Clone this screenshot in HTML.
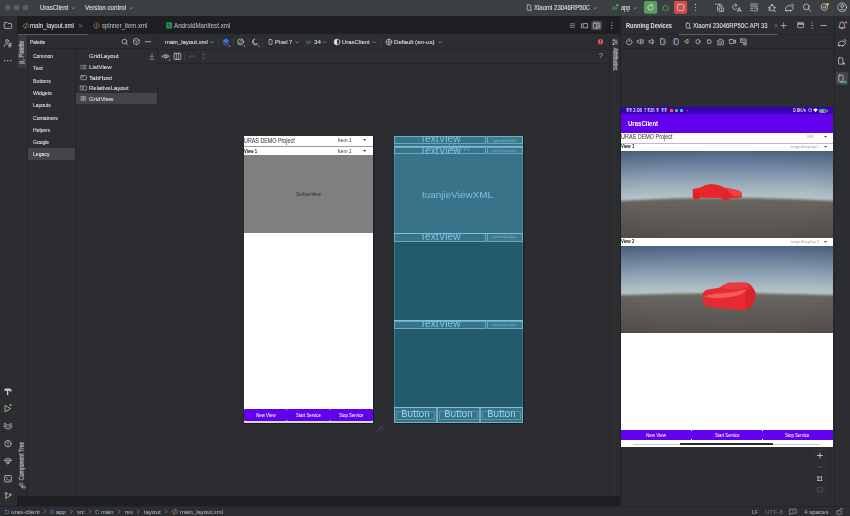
<!DOCTYPE html>
<html><head><meta charset="utf-8">
<style>
*{box-sizing:border-box;margin:0;padding:0}
html,body{width:850px;height:516px;overflow:hidden;background:#2b2d30;font-family:"Liberation Sans",sans-serif;color:#dfe1e5}
.a{position:absolute}
.t{position:absolute;white-space:nowrap;font-size:40px;line-height:40px;transform-origin:0 34px;will-change:transform}
svg{overflow:visible}
</style></head><body>
<div class="a" style="left:0px;top:0px;width:850px;height:16px;background:#3c3f41;"></div>
<div class="a" style="left:17px;top:16px;width:603.5px;height:18px;background:#1e1f22;"></div>
<div class="a" style="left:620.5px;top:16px;width:213px;height:18px;background:#2b2d30;"></div>
<div class="a" style="left:0px;top:16px;width:17px;height:490px;background:#2b2d30;"></div>
<div class="a" style="left:833.5px;top:16px;width:16.5px;height:490px;background:#2b2d30;border-left:0.7px solid #232528"></div>
<div class="a" style="left:17px;top:495.5px;width:603.5px;height:10px;background:#1e1f22;"></div>
<div class="a" style="left:0px;top:505.5px;width:850px;height:10.5px;background:#2b2d30;border-top:0.7px solid #242629"></div>
<div class="a" style="left:17.5px;top:33.5px;width:70.5px;height:1.5px;background:#5a5d63;"></div>
<div class="a" style="left:27px;top:35px;width:0.6px;height:460.5px;background:#232528;"></div>
<div class="a" style="left:17.5px;top:35px;width:9.5px;height:33px;background:#393b40;"></div>
<div class="a" style="left:28px;top:48.3px;width:129.5px;height:0.6px;background:#232528;"></div>
<div class="a" style="left:75.2px;top:49px;width:0.6px;height:446.5px;background:#232528;"></div>
<div class="a" style="left:157.3px;top:35px;width:0.6px;height:460.5px;background:#25272a;"></div>
<div class="a" style="left:27.7px;top:148.2px;width:47.5px;height:12px;background:#43454a;"></div>
<div class="a" style="left:76px;top:93.2px;width:81.3px;height:10.6px;background:#43454a;"></div>
<div class="a" style="left:158px;top:49.2px;width:451.5px;height:0.6px;background:#232528;"></div>
<div class="a" style="left:158px;top:63.2px;width:451.5px;height:0.6px;background:#232528;"></div>
<div class="a" style="left:609.3px;top:35px;width:0.6px;height:460.5px;background:#232528;"></div>
<div class="a" style="left:620.2px;top:16px;width:0.7px;height:490px;background:#202124;"></div>
<div class="a" style="left:621px;top:34.2px;width:212.5px;height:0.6px;background:#232528;"></div>
<div class="a" style="left:621px;top:48.3px;width:212.5px;height:0.6px;background:#232528;"></div>
<div class="a" style="left:679px;top:33.5px;width:98.5px;height:1.3px;background:#5a5d63;"></div>
<div class="a" style="left:243.8px;top:136px;width:129.2px;height:286.7px;background:#ffffff;box-shadow:0.5px 0.5px 1px 0.5px #1c1d1f"></div>
<div class="a" style="left:243.8px;top:146.2px;width:129.2px;height:0.9px;background:#9a9a9a;"></div>
<div class="a" style="left:243.8px;top:154.6px;width:129.2px;height:78.7px;background:#808080;"></div>
<div class="a" style="left:243.8px;top:421px;width:129.2px;height:1.7px;background:#d8d8d8;"></div>
<div class="a" style="left:243.8px;top:409px;width:42.8px;height:12px;background:#6200ee;border-radius:1.2px"></div>
<div class="a" style="left:286.9px;top:409px;width:42.7px;height:12px;background:#6200ee;border-radius:1.2px"></div>
<div class="a" style="left:329.9px;top:409px;width:43.1px;height:12px;background:#6200ee;border-radius:1.2px"></div>
<div class="a" style="left:393.8px;top:136px;width:129.2px;height:286.7px;background:#235b6d;box-shadow:0.5px 0.5px 1px 0.5px #1c1d1f"></div>
<div class="a" style="left:393.8px;top:136px;width:129.2px;height:97.2px;background:#38738a;"></div>
<div class="a" style="left:393.8px;top:233px;width:129.2px;height:8.8px;background:#38738a;"></div>
<div class="a" style="left:393.8px;top:320.5px;width:129.2px;height:8.2px;background:#38738a;"></div>
<div class="a" style="left:393.8px;top:407px;width:129.2px;height:15.7px;background:#38738a;"></div>
<div class="a" style="left:620.8px;top:107.3px;width:212.2px;height:339.5px;background:#ffffff;"></div>
<div class="a" style="left:620.8px;top:107.3px;width:212.2px;height:6.5px;background:#3700b3;"></div>
<div class="a" style="left:620.8px;top:113.8px;width:212.2px;height:19.7px;background:#6200ee;"></div>
<div class="a" style="left:620.8px;top:143px;width:212.2px;height:0.9px;background:#bdbdbd;"></div>
<div class="a" style="left:620.8px;top:429.5px;width:212.2px;height:10.5px;background:#6200ee;"></div>
<svg class="a" style="left:620.8px;top:151px;overflow:hidden" width="212.2" height="87" viewBox="0 0 212.2 87"><defs>
<linearGradient id="sky1" x1="0" y1="0" x2="0" y2="1"><stop offset="0" stop-color="#506685"/><stop offset="0.25" stop-color="#6a819d"/><stop offset="0.5" stop-color="#899cb1"/><stop offset="0.78" stop-color="#a9b8c2"/><stop offset="1" stop-color="#bfcccd"/></linearGradient>
<linearGradient id="gr1" x1="0" y1="0" x2="0" y2="1"><stop offset="0" stop-color="#77746d"/><stop offset="0.08" stop-color="#686560"/><stop offset="0.45" stop-color="#5f5b56"/><stop offset="1" stop-color="#53504b"/></linearGradient>
<radialGradient id="vg1" cx="0.5" cy="0.5" r="0.75"><stop offset="0.55" stop-color="#000" stop-opacity="0"/><stop offset="1" stop-color="#000" stop-opacity="0.09"/></radialGradient>
<filter id="bl1" x="-5%" y="-20%" width="110%" height="140%"><feGaussianBlur stdDeviation="0.45"/></filter><filter id="bg1" x="-5%" y="-20%" width="110%" height="140%"><feGaussianBlur stdDeviation="0.8"/></filter>
</defs>
<rect width="212.2" height="51.8" fill="url(#sky1)"/>
<path d="M-6 50.099999999999994 L0 49.8 Q106.1 43.400000000000006 212.2 49.8 L218.2 50.099999999999994 L218.2 93 L-6 93Z" fill="url(#gr1)" filter="url(#bg1)"/>
<rect width="212.2" height="87" fill="url(#vg1)"/>
<g filter="url(#bl1)"><path d="M 71.60,38.20 L 74.20,37.40 L 79.20,36.40 L 84.20,34.20 Q 87.20,33.00 90.20,32.90 Q 95.20,33.00 98.70,34.50 L 103.20,36.60 L 109.20,37.60 L 116.20,39.00 Q 120.80,40.50 120.80,43.00 L 120.80,46.40 L 116.20,47.00 L 109.20,47.20 Q 108.20,49.00 104.70,49.00 Q 101.20,49.00 100.40,47.00 L 79.70,46.80 Q 78.70,48.60 75.40,48.60 Q 72.20,48.60 71.80,46.00 Z" fill="#e8272d"/><path d="M 103.20,37.00 L 116.20,39.40 Q 120.20,41.00 120.50,43.00 L 120.50,45.00 L 112.20,45.00 Q 108.20,39.00 103.20,37.00 Z" fill="#ef4345"/><circle cx="75.5" cy="44.80000000000001" r="3.2" fill="#dc2328"/><circle cx="104.70000000000005" cy="45.19999999999999" r="3.5" fill="#dd2429"/></g></svg>
<svg class="a" style="left:620.8px;top:245.75px;overflow:hidden" width="212.2" height="87" viewBox="0 0 212.2 87"><defs>
<linearGradient id="sky2" x1="0" y1="0" x2="0" y2="1"><stop offset="0" stop-color="#506685"/><stop offset="0.25" stop-color="#6a819d"/><stop offset="0.5" stop-color="#899cb1"/><stop offset="0.78" stop-color="#a9b8c2"/><stop offset="1" stop-color="#bfcccd"/></linearGradient>
<linearGradient id="gr2" x1="0" y1="0" x2="0" y2="1"><stop offset="0" stop-color="#77746d"/><stop offset="0.08" stop-color="#686560"/><stop offset="0.45" stop-color="#5f5b56"/><stop offset="1" stop-color="#53504b"/></linearGradient>
<radialGradient id="vg2" cx="0.5" cy="0.5" r="0.75"><stop offset="0.55" stop-color="#000" stop-opacity="0"/><stop offset="1" stop-color="#000" stop-opacity="0.09"/></radialGradient>
<filter id="bl2" x="-5%" y="-20%" width="110%" height="140%"><feGaussianBlur stdDeviation="0.45"/></filter><filter id="bg2" x="-5%" y="-20%" width="110%" height="140%"><feGaussianBlur stdDeviation="0.8"/></filter>
</defs>
<rect width="212.2" height="50.9" fill="url(#sky2)"/>
<path d="M-6 49.199999999999996 L0 48.9 Q106.1 45.1 212.2 48.9 L218.2 49.199999999999996 L218.2 93 L-6 93Z" fill="url(#gr2)" filter="url(#bg2)"/>
<rect width="212.2" height="87" fill="url(#vg2)"/>
<g filter="url(#bl2)"><path d="M 81.60,49.25 Q 81.80,44.75 87.20,43.55 L 98.20,41.85 Q 103.20,38.05 108.20,36.85 L 124.20,36.55 Q 129.20,37.05 131.50,41.25 Q 135.20,45.25 134.70,50.75 L 132.70,56.25 Q 129.70,62.75 124.20,64.05 L 114.20,63.65 Q 94.20,62.25 83.20,59.85 Q 81.20,54.25 81.60,49.25 Z" fill="#e52a30"/><path d="M 98.20,41.85 Q 103.20,38.05 108.20,36.85 L 124.20,36.55 Q 128.20,37.25 127.20,41.25 Q 114.20,45.25 98.20,41.85 Z" fill="#ea3a3f"/><path d="M 83.20,50.75 Q 101.20,54.75 119.20,48.75 Q 125.20,46.25 124.70,42.75 Q 117.20,46.25 101.20,47.25 Q 89.20,47.25 83.20,50.75 Z" fill="#f4595a"/><path d="M 125.20,45.25 Q 129.20,41.25 132.20,43.25 Q 135.20,46.25 134.50,51.25 L 132.50,56.25 Q 129.70,62.25 125.20,63.25 Q 123.20,54.25 125.20,45.25 Z" fill="#d92429"/></g></svg>
<div class="t" style="left:39.60px;top:-24.05px;transform:scale(0.1510,0.1625);color:#dfe1e5;-webkit-text-stroke:0.012em #dfe1e5;">UrasClient</div>
<div class="t" style="left:84.80px;top:-24.05px;transform:scale(0.1557,0.1625);color:#dfe1e5;-webkit-text-stroke:0.012em #dfe1e5;">Version control</div>
<div class="t" style="left:533.80px;top:-24.05px;transform:scale(0.1505,0.1625);color:#dfe1e5;-webkit-text-stroke:0.012em #dfe1e5;">Xiaomi 23046RP50C</div>
<div class="t" style="left:621.30px;top:-23.75px;transform:scale(0.1394,0.1625);color:#dfe1e5;-webkit-text-stroke:0.012em #dfe1e5;">app</div>
<div class="t" style="left:30.40px;top:-6.00px;transform:scale(0.1519,0.1625);color:#dfe1e5;-webkit-text-stroke:0.012em #dfe1e5;">main_layout.xml</div>
<div class="t" style="left:101.70px;top:-6.00px;transform:scale(0.1498,0.1625);color:#b4b8bf;-webkit-text-stroke:0.012em #b4b8bf;">spinner_item.xml</div>
<div class="t" style="left:174.20px;top:-6.00px;transform:scale(0.1554,0.1625);color:#b4b8bf;-webkit-text-stroke:0.012em #b4b8bf;">AndroidManifest.xml</div>
<div class="t" style="left:626.00px;top:-6.00px;transform:scale(0.1418,0.1625);color:#dfe1e5;font-weight:bold;-webkit-text-stroke:0em #dfe1e5;">Running Devices</div>
<div class="t" style="left:693.40px;top:-6.00px;transform:scale(0.1485,0.1625);color:#dfe1e5;-webkit-text-stroke:0.012em #dfe1e5;">Xiaomi 23046RP50C API 33</div>
<div class="t" style="left:30.30px;top:10.00px;transform:scale(0.1229,0.1500);color:#dfe1e5;-webkit-text-stroke:0.012em #dfe1e5;">Palette</div>
<div class="t" style="left:32.90px;top:24.00px;transform:scale(0.1239,0.1500);color:#dfe1e5;-webkit-text-stroke:0.012em #dfe1e5;">Common</div>
<div class="t" style="left:32.90px;top:36.00px;transform:scale(0.1322,0.1500);color:#dfe1e5;-webkit-text-stroke:0.012em #dfe1e5;">Text</div>
<div class="t" style="left:32.90px;top:49.00px;transform:scale(0.1312,0.1500);color:#dfe1e5;-webkit-text-stroke:0.012em #dfe1e5;">Buttons</div>
<div class="t" style="left:32.90px;top:61.00px;transform:scale(0.1301,0.1500);color:#dfe1e5;-webkit-text-stroke:0.012em #dfe1e5;">Widgets</div>
<div class="t" style="left:32.90px;top:73.00px;transform:scale(0.1271,0.1500);color:#dfe1e5;-webkit-text-stroke:0.012em #dfe1e5;">Layouts</div>
<div class="t" style="left:32.90px;top:86.00px;transform:scale(0.1282,0.1500);color:#dfe1e5;-webkit-text-stroke:0.012em #dfe1e5;">Containers</div>
<div class="t" style="left:32.90px;top:98.00px;transform:scale(0.1255,0.1500);color:#dfe1e5;-webkit-text-stroke:0.012em #dfe1e5;">Helpers</div>
<div class="t" style="left:32.90px;top:110.00px;transform:scale(0.1248,0.1500);color:#dfe1e5;-webkit-text-stroke:0.012em #dfe1e5;">Google</div>
<div class="t" style="left:32.90px;top:122.00px;transform:scale(0.1279,0.1500);color:#dfe1e5;-webkit-text-stroke:0.012em #dfe1e5;">Legacy</div>
<div class="t" style="left:88.60px;top:24.00px;transform:scale(0.1518,0.1500);color:#dfe1e5;-webkit-text-stroke:0.012em #dfe1e5;">GridLayout</div>
<div class="t" style="left:88.60px;top:35.00px;transform:scale(0.1525,0.1500);color:#dfe1e5;-webkit-text-stroke:0.012em #dfe1e5;">ListView</div>
<div class="t" style="left:88.60px;top:46.00px;transform:scale(0.1561,0.1500);color:#dfe1e5;-webkit-text-stroke:0.012em #dfe1e5;">TabHost</div>
<div class="t" style="left:88.60px;top:56.00px;transform:scale(0.1497,0.1500);color:#dfe1e5;-webkit-text-stroke:0.012em #dfe1e5;">RelativeLayout</div>
<div class="t" style="left:88.60px;top:67.00px;transform:scale(0.1510,0.1500);color:#dfe1e5;-webkit-text-stroke:0.012em #dfe1e5;">GridView</div>
<div class="t" style="left:165.00px;top:10.00px;transform:scale(0.1484,0.1500);color:#dfe1e5;-webkit-text-stroke:0.012em #dfe1e5;">main_layout.xml</div>
<div class="t" style="left:275.30px;top:10.00px;transform:scale(0.1441,0.1500);color:#dfe1e5;-webkit-text-stroke:0.012em #dfe1e5;">Pixel 7</div>
<div class="t" style="left:314.00px;top:10.00px;transform:scale(0.1529,0.1500);color:#dfe1e5;-webkit-text-stroke:0.012em #dfe1e5;">34</div>
<div class="t" style="left:342.00px;top:10.00px;transform:scale(0.1484,0.1500);color:#dfe1e5;-webkit-text-stroke:0.012em #dfe1e5;">UrasClient</div>
<div class="t" style="left:394.00px;top:10.00px;transform:scale(0.1531,0.1500);color:#dfe1e5;-webkit-text-stroke:0.012em #dfe1e5;">Default (en-us)</div>
<div class="t" style="left:598.60px;top:24.34px;transform:scale(0.1708,0.1625);color:#9da0a8;-webkit-text-stroke:0.012em #9da0a8;">?</div>
<div class="t" style="left:22.00px;top:48.50px;transform-origin:0 0;transform:rotate(-90deg) scale(0.1325,0.1625) translate(-50%,-24px);color:#dfe1e5;-webkit-text-stroke:0.012em #dfe1e5;">Palette</div>
<div class="t" style="left:22.00px;top:461.20px;transform-origin:0 0;transform:rotate(-90deg) scale(0.1289,0.1625) translate(-50%,-24px);color:#dfe1e5;-webkit-text-stroke:0.012em #dfe1e5;">Component Tree</div>
<div class="t" style="left:614.80px;top:59.20px;transform-origin:0 0;transform:rotate(90deg) scale(0.1332,0.1625) translate(-50%,-24px);color:#dfe1e5;-webkit-text-stroke:0.012em #dfe1e5;">Attributes</div>
<div class="t" style="left:10.80px;top:480.00px;transform:scale(0.1561,0.1500);color:#a8abb2;-webkit-text-stroke:0.012em #a8abb2;">uras-client</div>
<div class="t" style="left:55.80px;top:480.00px;transform:scale(0.1484,0.1500);color:#a8abb2;-webkit-text-stroke:0.012em #a8abb2;">app</div>
<div class="t" style="left:76.70px;top:480.00px;transform:scale(0.1425,0.1500);color:#a8abb2;-webkit-text-stroke:0.012em #a8abb2;">src</div>
<div class="t" style="left:101.00px;top:480.00px;transform:scale(0.1442,0.1500);color:#a8abb2;-webkit-text-stroke:0.012em #a8abb2;">main</div>
<div class="t" style="left:124.80px;top:480.00px;transform:scale(0.1386,0.1500);color:#a8abb2;-webkit-text-stroke:0.012em #a8abb2;">res</div>
<div class="t" style="left:143.80px;top:480.00px;transform:scale(0.1565,0.1500);color:#a8abb2;-webkit-text-stroke:0.012em #a8abb2;">layout</div>
<div class="t" style="left:180.00px;top:480.00px;transform:scale(0.1488,0.1500);color:#a8abb2;-webkit-text-stroke:0.012em #a8abb2;">main_layout.xml</div>
<div class="t" style="left:751.80px;top:480.00px;transform:scale(0.1243,0.1500);color:#a8abb2;-webkit-text-stroke:0.012em #a8abb2;">LF</div>
<div class="t" style="left:765.00px;top:480.00px;transform:scale(0.1589,0.1500);color:#6f737a;-webkit-text-stroke:0.012em #6f737a;">UTF-8</div>
<div class="t" style="left:804.00px;top:480.00px;transform:scale(0.1537,0.1500);color:#a8abb2;-webkit-text-stroke:0.012em #a8abb2;">4 spaces</div>
<div class="t" style="left:817.20px;top:446.84px;transform:scale(0.0934,0.1625);color:#dfe1e5;font-weight:bold;-webkit-text-stroke:0.012em #dfe1e5;">1:1</div>
<div class="t" style="left:243.90px;top:108.55px;transform:scale(0.1342,0.1625);color:#444444;-webkit-text-stroke:0.012em #444444;">URAS DEMO Project</div>
<div class="t" style="left:338.00px;top:108.31px;transform:scale(0.1215,0.1450);color:#333;-webkit-text-stroke:0em #333;">Item 1</div>
<div class="t" style="left:338.00px;top:118.91px;transform:scale(0.1215,0.1450);color:#333;-webkit-text-stroke:0em #333;">Item 1</div>
<div class="t" style="left:243.90px;top:118.72px;transform:scale(0.1058,0.1300);color:#111;font-weight:bold;-webkit-text-stroke:0em #111;">View 1</div>
<div class="t" style="left:295.90px;top:161.62px;transform:scale(0.1121,0.1100);color:#2a2a2a;-webkit-text-stroke:0em #2a2a2a;">SurfaceView</div>
<svg class="a" style="left:363.3px;top:139.35000000000002px;" width="3.4" height="1.9" viewBox="0 0 3.4 1.9"><path d="M0 0H3.4L1.7 1.9Z" fill="#555"/></svg>
<svg class="a" style="left:363.3px;top:149.95000000000002px;" width="3.4" height="1.9" viewBox="0 0 3.4 1.9"><path d="M0 0H3.4L1.7 1.9Z" fill="#555"/></svg>
<div class="t" style="left:255.60px;top:382.62px;transform:scale(0.1107,0.1225);color:#ffffff;-webkit-text-stroke:0.005em #ffffff;">New View</div>
<div class="t" style="left:295.90px;top:382.62px;transform:scale(0.1088,0.1225);color:#ffffff;-webkit-text-stroke:0.005em #ffffff;">Start Service</div>
<div class="t" style="left:339.00px;top:382.62px;transform:scale(0.1080,0.1225);color:#ffffff;-webkit-text-stroke:0.005em #ffffff;">Stop Service</div>
<svg class="a" style="left:375px;top:423px;" width="9" height="9" viewBox="0 0 9 9"><path d="M1.5 8.5L8.5 1.5M5 8.5L8.5 5" stroke="#5a5d63" stroke-width="0.7" fill="none"/></svg>
<div class="a" style="left:393.8px;top:136px;width:129.2px;height:286.7px;border:0.5px solid #7cc0d6;background:none;opacity:0.3"></div>
<div class="a" style="left:393.8px;top:136px;width:92.19999999999999px;height:7.599999999999994px;border:0.45px solid #7cc0d6;background:none;opacity:0.7"></div>
<div class="a" style="left:486.6px;top:136px;width:36.39999999999998px;height:7.599999999999994px;border:0.45px solid #7cc0d6;background:rgba(120,180,200,0.12);opacity:0.7"></div>
<div class="a" style="left:418px;top:136px;width:44.5px;height:7.900000000000006px;overflow:hidden"><div class="t" style="will-change:auto;left:2px;top:-27.80px;transform:scale(0.2542,0.2542);color:#86c9de;opacity:0.95">TextView</div></div>
<div class="a" style="left:393.8px;top:147.4px;width:92.19999999999999px;height:7.0px;border:0.45px solid #7cc0d6;background:none;opacity:0.7"></div>
<div class="a" style="left:486.6px;top:147.4px;width:36.39999999999998px;height:7.0px;border:0.45px solid #7cc0d6;background:rgba(120,180,200,0.12);opacity:0.7"></div>
<div class="a" style="left:418px;top:147.4px;width:44.5px;height:7.300000000000011px;overflow:hidden"><div class="t" style="will-change:auto;left:2px;top:-27.80px;transform:scale(0.2542,0.2542);color:#86c9de;opacity:0.95">TextView</div></div>
<div class="a" style="left:393.8px;top:233.3px;width:92.19999999999999px;height:8.299999999999983px;border:0.45px solid #7cc0d6;background:none;opacity:0.7"></div>
<div class="a" style="left:486.6px;top:233.3px;width:36.39999999999998px;height:8.299999999999983px;border:0.45px solid #7cc0d6;background:rgba(120,180,200,0.12);opacity:0.7"></div>
<div class="a" style="left:418px;top:233.3px;width:44.5px;height:8.599999999999994px;overflow:hidden"><div class="t" style="will-change:auto;left:2px;top:-27.80px;transform:scale(0.2542,0.2542);color:#86c9de;opacity:0.95">TextView</div></div>
<div class="a" style="left:393.8px;top:320.6px;width:92.19999999999999px;height:8.0px;border:0.45px solid #7cc0d6;background:none;opacity:0.7"></div>
<div class="a" style="left:486.6px;top:320.6px;width:36.39999999999998px;height:8.0px;border:0.45px solid #7cc0d6;background:rgba(120,180,200,0.12);opacity:0.7"></div>
<div class="a" style="left:418px;top:320.6px;width:44.5px;height:8.300000000000011px;overflow:hidden"><div class="t" style="will-change:auto;left:2px;top:-27.80px;transform:scale(0.2542,0.2542);color:#86c9de;opacity:0.95">TextView</div></div>
<div class="a" style="left:393.8px;top:146.3px;width:129.2px;height:0.5px;background:#7cc0d6;"></div>
<div class="a" style="left:393.8px;top:232.7px;width:129.2px;height:0.5px;background:#7cc0d6;"></div>
<div class="a" style="left:393.8px;top:320.0px;width:129.2px;height:0.5px;background:#7cc0d6;"></div>
<div class="a" style="left:393.8px;top:406.7px;width:129.2px;height:0.5px;background:#7cc0d6;"></div>
<div class="a" style="left:445.6px;top:143px;width:26.399999999999977px;height:11px;overflow:hidden"><div class="t" style="will-change:auto;left:2px;top:-26.40px;transform:scale(0.2605,0.2605);color:#7cc0d6;opacity:0.45">View</div></div>
<div class="t" style="left:492.60px;top:107.89px;transform:scale(0.1014,0.1075);color:#7cc0d6;-webkit-text-stroke:0em #7cc0d6;">spinnerColor</div>
<div class="t" style="left:492.20px;top:117.78px;transform:scale(0.0643,0.0650);color:#7cc0d6;-webkit-text-stroke:0em #7cc0d6;opacity:0.85;">spinnerTargetDisplay</div>
<div class="t" style="left:492.20px;top:204.38px;transform:scale(0.0643,0.0650);color:#7cc0d6;-webkit-text-stroke:0em #7cc0d6;opacity:0.85;">spinnerTargetDisplay</div>
<div class="t" style="left:492.20px;top:291.58px;transform:scale(0.0643,0.0650);color:#7cc0d6;-webkit-text-stroke:0em #7cc0d6;opacity:0.85;">spinnerTargetDisplay</div>
<div class="t" style="left:422.20px;top:164.28px;transform:scale(0.2485,0.2485);color:#7cc0d6;-webkit-text-stroke:0em #7cc0d6;">tuanjieViewXML</div>
<div class="a" style="left:393.8px;top:407px;width:43.19999999999999px;height:15.699999999999989px;border:0.4px solid #7cc0d6;background:none;opacity:0.75"></div>
<div class="a" style="left:396.0px;top:411px;width:38.80000000000001px;height:8.600000000000023px;border:0.5px solid #7cc0d6;background:none;opacity:0.4"></div>
<div class="t" style="left:400.90px;top:383.00px;transform:scale(0.2473,0.2550);color:#8fd0e4;-webkit-text-stroke:0.004em #8fd0e4;">Button</div>
<div class="a" style="left:437px;top:407px;width:43.19999999999999px;height:15.699999999999989px;border:0.4px solid #7cc0d6;background:none;opacity:0.75"></div>
<div class="a" style="left:439.2px;top:411px;width:38.80000000000001px;height:8.600000000000023px;border:0.5px solid #7cc0d6;background:none;opacity:0.4"></div>
<div class="t" style="left:444.20px;top:383.00px;transform:scale(0.2473,0.2550);color:#8fd0e4;-webkit-text-stroke:0.004em #8fd0e4;">Button</div>
<div class="a" style="left:480.2px;top:407px;width:42.80000000000001px;height:15.699999999999989px;border:0.4px solid #7cc0d6;background:none;opacity:0.75"></div>
<div class="a" style="left:482.4px;top:411px;width:38.39999999999998px;height:8.600000000000023px;border:0.5px solid #7cc0d6;background:none;opacity:0.4"></div>
<div class="t" style="left:486.90px;top:383.00px;transform:scale(0.2473,0.2550);color:#8fd0e4;-webkit-text-stroke:0.004em #8fd0e4;">Button</div>
<svg class="a" style="left:625.8px;top:108.4px;" width="3.2" height="3.6" viewBox="0 0 3.2 3.6"><path d="M0.3 0.5H2.9000000000000004M1.6 0V3.6M0.3 1.8H2.9000000000000004M0.5 3.2H2.7" stroke="#fff" stroke-width="0.55" fill="none" opacity="0.9"/></svg>
<svg class="a" style="left:629.4px;top:108.4px;" width="3.2" height="3.6" viewBox="0 0 3.2 3.6"><path d="M0.3 0.5H2.9000000000000004M1.6 0V3.6M0.3 1.8H2.9000000000000004M0.5 3.2H2.7" stroke="#fff" stroke-width="0.55" fill="none" opacity="0.9"/></svg>
<div class="t" style="left:633.20px;top:78.26px;transform:scale(0.1169,0.1150);color:#ffffff;-webkit-text-stroke:0.006em #ffffff;">2:06</div>
<div class="t" style="left:644.00px;top:78.26px;transform:scale(0.1034,0.1150);color:#ffffff;-webkit-text-stroke:0.006em #ffffff;">7</div>
<svg class="a" style="left:646.8px;top:108.4px;" width="3.2" height="3.6" viewBox="0 0 3.2 3.6"><path d="M0.3 0.5H2.9000000000000004M1.6 0V3.6M0.3 1.8H2.9000000000000004M0.5 3.2H2.7" stroke="#fff" stroke-width="0.55" fill="none" opacity="0.9"/></svg>
<div class="t" style="left:650.40px;top:78.26px;transform:scale(0.1034,0.1150);color:#ffffff;-webkit-text-stroke:0.006em #ffffff;">26</div>
<svg class="a" style="left:655.6px;top:108.4px;" width="3.2" height="3.6" viewBox="0 0 3.2 3.6"><path d="M0.3 0.5H2.9000000000000004M1.6 0V3.6M0.3 1.8H2.9000000000000004M0.5 3.2H2.7" stroke="#fff" stroke-width="0.55" fill="none" opacity="0.9"/></svg>
<svg class="a" style="left:660.6px;top:108.4px;" width="3.2" height="3.6" viewBox="0 0 3.2 3.6"><path d="M0.3 0.5H2.9000000000000004M1.6 0V3.6M0.3 1.8H2.9000000000000004M0.5 3.2H2.7" stroke="#fff" stroke-width="0.55" fill="none" opacity="0.9"/></svg>
<svg class="a" style="left:664.2px;top:108.4px;" width="3.2" height="3.6" viewBox="0 0 3.2 3.6"><path d="M0.3 0.5H2.9000000000000004M1.6 0V3.6M0.3 1.8H2.9000000000000004M0.5 3.2H2.7" stroke="#fff" stroke-width="0.55" fill="none" opacity="0.9"/></svg>
<div class="a" style="left:670.2px;top:108.9px;width:3.2px;height:3.2px;background:#f2672e;border-radius:0.5px"></div>
<div class="a" style="left:675.2px;top:108.9px;width:3.2px;height:3.2px;background:#5dbb46;border-radius:0.5px"></div>
<div class="a" style="left:680.3px;top:108.9px;width:3.2px;height:3.2px;background:#2fc6b5;border-radius:0.5px"></div>
<div class="a" style="left:686.8px;top:110.2px;width:0.8px;height:0.8px;background:#b9a5f0;border-radius:50%"></div>
<div class="t" style="left:793.20px;top:78.26px;transform:scale(0.1146,0.1150);color:#ffffff;-webkit-text-stroke:0.006em #ffffff;">0.9K/s</div>
<svg class="a" style="left:807.5px;top:108.3px;" width="4.2" height="4.4" viewBox="0 0 4.2 4.4"><circle cx="2.1" cy="2.4" r="1.5" stroke="#fff" stroke-width="0.6" fill="none"/><path d="M0.5 0.9L1.3 0.3M3.7 0.9L2.9 0.3" stroke="#fff" stroke-width="0.5"/></svg>
<svg class="a" style="left:813px;top:108.3px;" width="5" height="4.4" viewBox="0 0 5 4.4"><path d="M0.2 1.6Q2.5 -0.6 4.8 1.6L2.5 4.2Z" fill="#fff"/></svg>
<svg class="a" style="left:819.3px;top:108.7px;" width="9.6" height="3.8" viewBox="0 0 9.6 3.8"><rect x="0.3" y="0.3" width="6.6" height="3.2" rx="1" stroke="#fff" stroke-width="0.5" fill="none"/><rect x="0.9" y="0.9" width="4.6" height="2" rx="0.5" fill="#4cd137"/><path d="M8.3 0.6L7.8 1.9H8.7L8.2 3.2" stroke="#fff" stroke-width="0.5" fill="none"/></svg>
<div class="t" style="left:627.60px;top:92.28px;transform:scale(0.1505,0.1650);color:#ffffff;font-weight:bold;-webkit-text-stroke:0em #ffffff;">UrasClient</div>
<div class="t" style="left:620.90px;top:105.14px;transform:scale(0.1366,0.1700);color:#444444;-webkit-text-stroke:0.01em #444444;">URAS DEMO Project</div>
<div class="t" style="left:807.00px;top:104.30px;transform:scale(0.1142,0.1100);color:#ababab;-webkit-text-stroke:0em #ababab;">red</div>
<svg class="a" style="left:824.0500000000001px;top:136.1px;" width="3.1" height="1.8" viewBox="0 0 3.1 1.8"><path d="M0 0H3.1L1.55 1.8Z" fill="#505050"/></svg>
<div class="t" style="left:620.90px;top:114.25px;transform:scale(0.1074,0.1250);color:#111;font-weight:bold;-webkit-text-stroke:0em #111;">View 1</div>
<div class="t" style="left:790.70px;top:114.36px;transform:scale(0.1068,0.1050);color:#9a9a9a;-webkit-text-stroke:0em #9a9a9a;">targetDisplay1</div>
<svg class="a" style="left:824.0500000000001px;top:146.1px;" width="3.1" height="1.8" viewBox="0 0 3.1 1.8"><path d="M0 0H3.1L1.55 1.8Z" fill="#505050"/></svg>
<div class="t" style="left:620.90px;top:209.25px;transform:scale(0.1074,0.1250);color:#111;font-weight:bold;-webkit-text-stroke:0em #111;">View 2</div>
<div class="t" style="left:790.70px;top:209.26px;transform:scale(0.1061,0.1050);color:#9a9a9a;-webkit-text-stroke:0em #9a9a9a;">targetDisplay 2</div>
<svg class="a" style="left:824.0500000000001px;top:241.0px;" width="3.1" height="1.8" viewBox="0 0 3.1 1.8"><path d="M0 0H3.1L1.55 1.8Z" fill="#505050"/></svg>
<div class="t" style="left:646.00px;top:402.65px;transform:scale(0.1129,0.1250);color:#ffffff;-webkit-text-stroke:0.004em #ffffff;">New View</div>
<div class="t" style="left:715.00px;top:402.65px;transform:scale(0.1074,0.1250);color:#ffffff;-webkit-text-stroke:0.004em #ffffff;">Start Service</div>
<div class="t" style="left:785.20px;top:402.65px;transform:scale(0.1072,0.1250);color:#ffffff;-webkit-text-stroke:0.004em #ffffff;">Stop Service</div>
<div class="a" style="left:690.9000000000001px;top:429.5px;width:0.6px;height:0.8px;background:#ffffff;"></div>
<div class="a" style="left:690.9000000000001px;top:439.2px;width:0.6px;height:0.8px;background:#ffffff;"></div>
<div class="a" style="left:761.9000000000001px;top:429.5px;width:0.6px;height:0.8px;background:#ffffff;"></div>
<div class="a" style="left:761.9000000000001px;top:439.2px;width:0.6px;height:0.8px;background:#ffffff;"></div>
<div class="a" style="left:632.6px;top:443.9px;width:187.5px;height:0.5px;background:#c9c9c9;"></div>
<div class="a" style="left:680px;top:443.4px;width:93px;height:1.3px;background:#2a2a2a;border-radius:0.6px"></div>
<svg class="a" style="left:0px;top:0px;pointer-events:none" width="850" height="516" viewBox="0 0 850 516"><circle cx="7.9" cy="7.6" r="2.9" fill="#5b5d5f"/><circle cx="16.6" cy="7.6" r="2.9" fill="#5b5d5f"/><circle cx="25.4" cy="7.6" r="2.9" fill="#5b5d5f"/><path d="M71.8 7.449999999999999L73.3 8.95L74.8 7.449999999999999" stroke="#9da0a8" stroke-width="0.7" fill="none" stroke-linecap="round" stroke-linejoin="round"/><path d="M129.8 7.449999999999999L131.3 8.95L132.8 7.449999999999999" stroke="#9da0a8" stroke-width="0.7" fill="none" stroke-linecap="round" stroke-linejoin="round"/><path d="M593.8 7.449999999999999L595.3 8.95L596.8 7.449999999999999" stroke="#9da0a8" stroke-width="0.7" fill="none" stroke-linecap="round" stroke-linejoin="round"/><path d="M633.8 7.449999999999999L635.3 8.95L636.8 7.449999999999999" stroke="#9da0a8" stroke-width="0.7" fill="none" stroke-linecap="round" stroke-linejoin="round"/><rect x="527.2" y="4.9" width="3.6" height="5.4" rx="0.7" stroke="#ced0d6" stroke-width="0.7" fill="none" stroke-linecap="round" stroke-linejoin="round"/><circle cx="531.0000000000001" cy="10.200000000000001" r="0.95" fill="#3ddc46"/><path d="M612 9.8Q612 6.6 614.8 6.6Q617.6 6.6 617.6 9.8Z" fill="#57965c" fill-opacity="0.55" /><path d="M613.0 7.1L612.4 5.8M616.6 7.1L617.2 5.8" stroke="#57965c" stroke-width="0.55" fill="none" stroke-linecap="round" stroke-linejoin="round"/><circle cx="617.4" cy="5.2" r="1.1" fill="#3ddc46"/><rect x="644" y="1.1" width="13.2" height="12.7" rx="1.8" fill="#599e5e"/><path d="M653.1 7.6A2.6 2.6 0 1 1 651.6 5.2" stroke="#e8f3e8" stroke-width="0.8" fill="none" stroke-linecap="round" stroke-linejoin="round"/><path d="M651.2 3.9L652.9 5.2L651.4 6.6" stroke="#e8f3e8" stroke-width="0.7" fill="none" stroke-linecap="round" stroke-linejoin="round"/><ellipse cx="665.5" cy="8.2" rx="2.3" ry="2.7" stroke="#539158" stroke-width="0.75" fill="none" stroke-linecap="round" stroke-linejoin="round"/><path d="M664.1 5.8Q665.5 3.6 666.9 5.8M663.2 7.2L662.2 6.4M667.8 7.2L668.8 6.4M663.2 9.6L662.2 10.4M667.8 9.6L668.8 10.4" stroke="#539158" stroke-width="0.65" fill="none" stroke-linecap="round" stroke-linejoin="round"/><rect x="674.1" y="1.1" width="13" height="12.7" rx="1.8" fill="#cf4f4f"/><rect x="677.5" y="4.3" width="6.3" height="6.3" rx="1" stroke="#f5cfcf" stroke-width="0.75" fill="none" stroke-linecap="round" stroke-linejoin="round"/><circle cx="695.5" cy="4.4" r="0.55" fill="#ced0d6"/><circle cx="695.5" cy="7.3" r="0.55" fill="#ced0d6"/><circle cx="695.5" cy="10.2" r="0.55" fill="#ced0d6"/><path d="M715.5 4.2H720.8L722 5.6V6.4H719.2V4.2M717.6 6.4V10.8M719.6 8H723.4V11.4H719.6ZM721.5 11.4V9.8" stroke="#ced0d6" stroke-width="0.75" fill="none" stroke-linecap="round" stroke-linejoin="round"/><path d="M736.6 5.2A2.4 2.4 0 1 0 736.9 8.6M735.4 4L737 5.3L735.5 6.6M737.6 11.6L739.3 7.4L741 11.6M738.2 10.4H740.4" stroke="#ced0d6" stroke-width="0.75" fill="none" stroke-linecap="round" stroke-linejoin="round"/><path d="M750.6 4H757.8M750.6 6H757.8M750.6 8.2H753M750.6 10.4H753M754.6 8H757.6V9.4Q757.6 11 755.8 11H754.6" stroke="#ced0d6" stroke-width="0.75" fill="none" stroke-linecap="round" stroke-linejoin="round"/><path d="M769.6 8.6Q769.6 5.4 772 5.4Q774.4 5.4 774.4 8.6Q774.4 11 772 11Q769.6 11 769.6 8.6ZM770.8 5.4L772 4L773.2 5.4M769.6 7.6H768.4M774.4 7.6H775.6M769.8 10H768.6M773.8 10.4L775.8 11.6" stroke="#ced0d6" stroke-width="0.75" fill="none" stroke-linecap="round" stroke-linejoin="round"/><path d="M785.4 10.2Q785.2 6 789 5.6Q792 5.4 793.4 8L791.8 10.2ZM786.6 10.2V11.4M790.4 10.2V11.4M791.6 4.4Q793.2 3.6 793.6 5.2Q793.4 6 792.6 6.4" stroke="#ced0d6" stroke-width="0.75" fill="none" stroke-linecap="round" stroke-linejoin="round"/><circle cx="806.3" cy="6.9" r="2.9" stroke="#ced0d6" stroke-width="0.75" fill="none" stroke-linecap="round" stroke-linejoin="round"/><path d="M808.5 9.1L810.8 11.4" stroke="#ced0d6" stroke-width="0.75" fill="none" stroke-linecap="round" stroke-linejoin="round"/><path d="M824.3 3.6L827.3 5.4V9L824.3 10.8L821.3 9V5.4Z" stroke="#ced0d6" stroke-width="0.75" fill="none" stroke-linecap="round" stroke-linejoin="round"/><circle cx="824.3" cy="7.2" r="1.2" stroke="#ced0d6" stroke-width="0.75" fill="none" stroke-linecap="round" stroke-linejoin="round"/><circle cx="827.4" cy="4.3" r="1.35" fill="#f2c037"/><circle cx="842.2" cy="7.3" r="4.4" stroke="#ced0d6" stroke-width="0.75" fill="none" stroke-linecap="round" stroke-linejoin="round"/><circle cx="842.2" cy="6" r="1.5" stroke="#ced0d6" stroke-width="0.75" fill="none" stroke-linecap="round" stroke-linejoin="round"/><path d="M839.3 10.5Q842.2 7.6 845.1 10.5" stroke="#ced0d6" stroke-width="0.75" fill="none" stroke-linecap="round" stroke-linejoin="round"/><path d="M24.9 23.7L23.099999999999998 25.799999999999997L24.9 27.9M27.299999999999997 23.7L29.1 25.799999999999997L27.299999999999997 27.9M26.7 23.0L25.5 28.599999999999998" stroke="#c77d55" stroke-width="0.7" fill="none" stroke-linecap="round" stroke-linejoin="round"/><path d="M95.4 23.7L93.60000000000001 25.799999999999997L95.4 27.9M97.8 23.7L99.60000000000001 25.799999999999997L97.8 27.9M97.2 23.0L96.0 28.599999999999998" stroke="#c77d55" stroke-width="0.7" fill="none" stroke-linecap="round" stroke-linejoin="round"/><path d="M173.7 509.7L171.9 511.79999999999995L173.7 513.9M176.1 509.7L177.9 511.79999999999995L176.1 513.9M175.5 509.0L174.3 514.6" stroke="#c77d55" stroke-width="0.7" fill="none" stroke-linecap="round" stroke-linejoin="round"/><path d="M79.1 24.2L82.1 27.2M82.1 24.2L79.1 27.2" stroke="#868a91" stroke-width="0.6" fill="none" stroke-linecap="round" stroke-linejoin="round"/><path d="M774.5 24.2L777.5 27.2M777.5 24.2L774.5 27.2" stroke="#868a91" stroke-width="0.6" fill="none" stroke-linecap="round" stroke-linejoin="round"/><rect x="166.2" y="22.2" width="5.9" height="6.2" rx="0.9" fill="#32905a"/><path d="M167.6 24.2H170.7M167.6 26.2H170.7" stroke="#1e1f22" stroke-width="0.6"/><path d="M570.2 23.8H574.6M570.2 25.6H574.6M570.2 27.4H574.6" stroke="#9da0a8" stroke-width="0.7" fill="none" stroke-linecap="round" stroke-linejoin="round"/><path d="M581.4 23.4V28M583.6 23.6H587.6V27.8H583.6Z" stroke="#ced0d6" stroke-width="0.7" fill="none" stroke-linecap="round" stroke-linejoin="round"/><rect x="591.2" y="20.8" width="10.8" height="9.4" rx="1.5" fill="#43454a"/><rect x="593.4" y="23" width="6.4" height="5.2" rx="0.8" stroke="#ced0d6" stroke-width="0.7" fill="none" stroke-linecap="round" stroke-linejoin="round"/><path d="M596.6 23V28.2M597.6 25H598.8M597.6 26.6H598.8" stroke="#ced0d6" stroke-width="0.6" fill="none" stroke-linecap="round" stroke-linejoin="round"/><rect x="604.6" y="21.5" width="0.6" height="8" fill="#3a3c40"/><circle cx="611.8" cy="22.7" r="0.55" fill="#ced0d6"/><circle cx="611.8" cy="25.4" r="0.55" fill="#ced0d6"/><circle cx="611.8" cy="28.099999999999998" r="0.55" fill="#ced0d6"/><rect x="686.2" y="23" width="3.4" height="5.2" rx="0.7" stroke="#ced0d6" stroke-width="0.7" fill="none" stroke-linecap="round" stroke-linejoin="round"/><circle cx="689.8000000000001" cy="28.099999999999998" r="0.95" fill="#3ddc46"/><path d="M781.1 25.5H786.3M783.7 22.9V28.1" stroke="#ced0d6" stroke-width="0.65" fill="none" stroke-linecap="round" stroke-linejoin="round"/><rect x="797.7" y="22.7" width="6" height="5" rx="0.6" stroke="#ced0d6" stroke-width="0.7" fill="none" stroke-linecap="round" stroke-linejoin="round"/><path d="M797.7 24H803.7" stroke="#ced0d6" stroke-width="1.2"/><circle cx="812.2" cy="22.7" r="0.55" fill="#ced0d6"/><circle cx="812.2" cy="25.4" r="0.55" fill="#ced0d6"/><circle cx="812.2" cy="28.099999999999998" r="0.55" fill="#ced0d6"/><path d="M821 25.5H826.4" stroke="#ced0d6" stroke-width="0.75" fill="none" stroke-linecap="round" stroke-linejoin="round"/><path d="M627.6 39.6A2.8 2.8 0 1 0 630.8 39.6M629.2 38.6V41.6" stroke="#ced0d6" stroke-width="0.75" fill="none" stroke-linecap="round" stroke-linejoin="round"/><path d="M637.6 40.6H638.8L640.6 39V44.2L638.8 42.6H637.6ZM641.8 40.2Q642.8 41.6 641.8 43M642.9 39.2Q644.6 41.6 642.9 44" stroke="#ced0d6" stroke-width="0.65" fill="none" stroke-linecap="round" stroke-linejoin="round"/><path d="M649.4 40.6H650.6L652.4 39V44.2L650.6 42.6H649.4ZM653.6 40.4Q654.5 41.6 653.6 42.8" stroke="#ced0d6" stroke-width="0.65" fill="none" stroke-linecap="round" stroke-linejoin="round"/><rect x="660.6" y="38.8" width="3.6" height="5.8" rx="0.6" stroke="#ced0d6" stroke-width="0.7" fill="none" stroke-linecap="round" stroke-linejoin="round"/><path d="M665 38.8Q667.2 41.6 665 44.6" stroke="#3574f0" stroke-width="0.8" fill="none" stroke-linecap="round" stroke-linejoin="round"/><rect x="674.6" y="38.8" width="3.6" height="5.8" rx="0.6" stroke="#ced0d6" stroke-width="0.7" fill="none" stroke-linecap="round" stroke-linejoin="round"/><path d="M673.8 38.8Q671.6 41.6 673.8 44.6" stroke="#3574f0" stroke-width="0.8" fill="none" stroke-linecap="round" stroke-linejoin="round"/><path d="M688 39.6V43.6L684.8 41.6Z" stroke="#ced0d6" stroke-width="0.7" fill="none" stroke-linecap="round" stroke-linejoin="round"/><circle cx="698" cy="41.6" r="2.1" stroke="#ced0d6" stroke-width="0.7" fill="none" stroke-linecap="round" stroke-linejoin="round"/><rect x="707.5" y="39.9" width="3.4" height="3.4" rx="0.4" stroke="#ced0d6" stroke-width="0.7" fill="none" stroke-linecap="round" stroke-linejoin="round"/><path d="M717.8 44.4V40.4H719L719.7 39.2H721.5L722.2 40.4H723.4V44.4Z" stroke="#ced0d6" stroke-width="0.7" fill="none" stroke-linecap="round" stroke-linejoin="round"/><circle cx="720.6" cy="42.4" r="1.1" stroke="#ced0d6" stroke-width="0.6" fill="none" stroke-linecap="round" stroke-linejoin="round"/><rect x="729.4" y="39.6" width="4.4" height="4" rx="0.5" stroke="#ced0d6" stroke-width="0.7" fill="none" stroke-linecap="round" stroke-linejoin="round"/><path d="M733.8 41L735.6 40V43.2L733.8 42.2" stroke="#ced0d6" stroke-width="0.7" fill="none" stroke-linecap="round" stroke-linejoin="round"/><rect x="740.6" y="39" width="5.6" height="3.6" rx="0.5" stroke="#ced0d6" stroke-width="0.7" fill="none" stroke-linecap="round" stroke-linejoin="round"/><path d="M741.8 40.8H745M744 43.6H746.4V45H744Z" stroke="#ced0d6" stroke-width="0.6" fill="none" stroke-linecap="round" stroke-linejoin="round"/><path d="M839 27.4Q839.8 26.6 839.8 24.6Q839.8 22 842 22Q844.2 22 844.2 24.6Q844.2 26.6 845 27.4ZM841.2 28.6H842.8" stroke="#ced0d6" stroke-width="0.75" fill="none" stroke-linecap="round" stroke-linejoin="round"/><circle cx="846" cy="22.4" r="1.2" fill="#db5c5c"/><path d="M838 45.2Q837.8 41.4 841.4 41Q844.2 40.8 845.6 43.2L844 45.2ZM839.2 45.2V46.2M842.8 45.2V46.2M844 39.8Q845.6 39.2 846 40.6Q845.8 41.6 845 41.8" stroke="#ced0d6" stroke-width="0.75" fill="none" stroke-linecap="round" stroke-linejoin="round"/><rect x="838.6" y="57.8" width="4.2" height="6.4" rx="0.7" stroke="#ced0d6" stroke-width="0.75" fill="none" stroke-linecap="round" stroke-linejoin="round"/><path d="M842 64.4L843.8 61.8L845.6 64.4Z" fill="#ced0d6" stroke="#2b2d30" stroke-width="0.3"/><rect x="835.7" y="72" width="12.7" height="13" rx="2" fill="#43454a"/><rect x="838.8" y="75.2" width="4.2" height="6.4" rx="0.7" stroke="#ced0d6" stroke-width="0.75" fill="none" stroke-linecap="round" stroke-linejoin="round"/><path d="M841 82.4H843.6" stroke="#ced0d6" stroke-width="0.6" fill="none" stroke-linecap="round" stroke-linejoin="round"/><circle cx="845.2" cy="82" r="1.15" fill="#3ddc46"/><path d="M4.2 23.2Q4.2 22.4 5 22.4H7L8 23.4H10.8Q11.6 23.4 11.6 24.2V27.6Q11.6 28.4 10.8 28.4H5Q4.2 28.4 4.2 27.6Z" stroke="#ced0d6" stroke-width="0.75" fill="none" stroke-linecap="round" stroke-linejoin="round"/><circle cx="7" cy="41" r="1.4" stroke="#ced0d6" stroke-width="0.7" fill="none" stroke-linecap="round" stroke-linejoin="round"/><path d="M4.2 46.6V45.6Q4.2 43.8 7 43.8Q8.4 43.8 9 44.4M8.6 45.4H11.6M8.6 46.8H10.8" stroke="#ced0d6" stroke-width="0.7" fill="none" stroke-linecap="round" stroke-linejoin="round"/><circle cx="10" cy="43.6" r="0.9" stroke="#ced0d6" stroke-width="0.6" fill="none" stroke-linecap="round" stroke-linejoin="round"/><circle cx="4.6" cy="60.7" r="0.65" fill="#ced0d6"/><circle cx="7.8" cy="60.7" r="0.65" fill="#ced0d6"/><circle cx="11" cy="60.7" r="0.65" fill="#ced0d6"/><path d="M4.4 389.2Q5 388.4 6 388.4H9.6Q11.4 388.6 11.6 390.6V391.4H10V390.8H4.4Z" fill="#ced0d6"/><path d="M7.6 391V394.6" stroke="#ced0d6" stroke-width="1.3" fill="none" stroke-linecap="round" stroke-linejoin="round"/><path d="M5.4 405.6L10.6 408.6L5.4 411.6Z" stroke="#ced0d6" stroke-width="0.75" fill="none" stroke-linecap="round" stroke-linejoin="round"/><circle cx="10.6" cy="405.2" r="1.1" fill="#3ddc46"/><path d="M5 423.2L6.4 425H9.6L11 423.2V427.6Q11 429 8 429Q5 429 5 427.6ZM4 426.4H5M11 426.4H12M6.8 426.6V427M9.2 426.6V427" stroke="#ced0d6" stroke-width="0.7" fill="none" stroke-linecap="round" stroke-linejoin="round"/><circle cx="8" cy="443.7" r="3.2" stroke="#ced0d6" stroke-width="0.75" fill="none" stroke-linecap="round" stroke-linejoin="round"/><path d="M8 441.8V444.2" stroke="#ced0d6" stroke-width="0.8" fill="none" stroke-linecap="round" stroke-linejoin="round"/><circle cx="8" cy="445.5" r="0.45" fill="#ced0d6"/><path d="M4.6 460.2L6.2 458.4H9.8L11.4 460.2L8 464ZM4.6 460.2H11.4M6.6 460.2L8 463.6L9.4 460.2" stroke="#ced0d6" stroke-width="0.65" fill="none" stroke-linecap="round" stroke-linejoin="round"/><rect x="4.6" y="475.6" width="6.8" height="6.2" rx="0.9" stroke="#ced0d6" stroke-width="0.75" fill="none" stroke-linecap="round" stroke-linejoin="round"/><path d="M6.2 477.4L7.6 478.6L6.2 479.8M8.2 480H9.8" stroke="#ced0d6" stroke-width="0.6" fill="none" stroke-linecap="round" stroke-linejoin="round"/><circle cx="6" cy="493.4" r="1" stroke="#ced0d6" stroke-width="0.65" fill="none" stroke-linecap="round" stroke-linejoin="round"/><circle cx="10.2" cy="494.6" r="1" stroke="#ced0d6" stroke-width="0.65" fill="none" stroke-linecap="round" stroke-linejoin="round"/><path d="M6 494.4V499M6 497.4Q10.2 497.4 10.2 495.6" stroke="#ced0d6" stroke-width="0.65" fill="none" stroke-linecap="round" stroke-linejoin="round"/><circle cx="124.4" cy="41.5" r="2.3" stroke="#ced0d6" stroke-width="0.7" fill="none" stroke-linecap="round" stroke-linejoin="round"/><path d="M126.1 43.3L127.8 45" stroke="#ced0d6" stroke-width="0.7" fill="none" stroke-linecap="round" stroke-linejoin="round"/><path d="M136.4 38.4L139.2 40V43.2L136.4 44.8L133.6 43.2V40Z" stroke="#ced0d6" stroke-width="0.7" fill="none" stroke-linecap="round" stroke-linejoin="round"/><path d="M133.8 40.2L136.4 41.6L139 40.2M136.4 41.6V44.6" stroke="#ced0d6" stroke-width="0.5" fill="none" stroke-linecap="round" stroke-linejoin="round"/><path d="M145.3 41.7H150.8" stroke="#ced0d6" stroke-width="0.75" fill="none" stroke-linecap="round" stroke-linejoin="round"/><path d="M152 53.6V57.6M150.4 56.2L152 57.8L153.6 56.2M149.9 59.4H154.1" stroke="#9da0a8" stroke-width="0.7" fill="none" stroke-linecap="round" stroke-linejoin="round"/><path d="M19.6 63.2H24.8M19.8 61.6H22.6M23.4 59.2L24.6 60.4L22.2 62.4" stroke="#ced0d6" stroke-width="0.7" fill="none" stroke-linecap="round" stroke-linejoin="round"/><rect x="20" y="483.2" width="2.6" height="2.2" stroke="#ced0d6" stroke-width="0.55" fill="none" stroke-linecap="round" stroke-linejoin="round"/><rect x="23" y="486.2" width="2.2" height="1.8" stroke="#ced0d6" stroke-width="0.55" fill="none" stroke-linecap="round" stroke-linejoin="round"/><path d="M21.3 485.4V487.2H23" stroke="#ced0d6" stroke-width="0.55" fill="none" stroke-linecap="round" stroke-linejoin="round"/><path d="M612.6 40.2H617.4M612.6 42.2H617.4M612.6 44.2H617.4" stroke="#b4b8bf" stroke-width="0.55" fill="none" stroke-linecap="round" stroke-linejoin="round"/><path d="M614 39.6V40.8M616 41.6V42.8M613.6 43.6V44.8" stroke="#dfe1e5" stroke-width="0.9" fill="none" stroke-linecap="round" stroke-linejoin="round"/><path d="M82.6 65.4H86.2M82.6 67.1H86.2M82.6 68.8H86.2" stroke="#b4b8bf" stroke-width="0.65" fill="none" stroke-linecap="round" stroke-linejoin="round"/><path d="M80.8 65.4H81.2M80.8 67.1H81.2M80.8 68.8H81.2" stroke="#b4b8bf" stroke-width="0.7" fill="none" stroke-linecap="round" stroke-linejoin="round"/><rect x="80.8" y="75.5" width="5.6" height="4.2" rx="0.6" stroke="#b4b8bf" stroke-width="0.65" fill="none" stroke-linecap="round" stroke-linejoin="round"/><path d="M80.8 76.9H83.4V75.5" stroke="#b4b8bf" stroke-width="0.6" fill="none" stroke-linecap="round" stroke-linejoin="round"/><rect x="80.2" y="86" width="2.2" height="4.2" rx="0.3" stroke="#b4b8bf" stroke-width="0.6" fill="none" stroke-linecap="round" stroke-linejoin="round"/><rect x="83.2" y="86" width="3.4" height="4.2" rx="0.3" stroke="#b4b8bf" stroke-width="0.6" fill="none" stroke-linecap="round" stroke-linejoin="round"/><rect x="81.3" y="96.5" width="1.9" height="1.7" stroke="#b4b8bf" stroke-width="0.55" fill="none" stroke-linecap="round" stroke-linejoin="round"/><rect x="81.3" y="98.9" width="1.9" height="1.7" stroke="#b4b8bf" stroke-width="0.55" fill="none" stroke-linecap="round" stroke-linejoin="round"/><rect x="83.89999999999999" y="96.5" width="1.9" height="1.7" stroke="#b4b8bf" stroke-width="0.55" fill="none" stroke-linecap="round" stroke-linejoin="round"/><rect x="83.89999999999999" y="98.9" width="1.9" height="1.7" stroke="#b4b8bf" stroke-width="0.55" fill="none" stroke-linecap="round" stroke-linejoin="round"/><path d="M210.4 41.55L211.9 43.05L213.4 41.55" stroke="#9da0a8" stroke-width="0.7" fill="none" stroke-linecap="round" stroke-linejoin="round"/><path d="M295.4 41.55L296.9 43.05L298.4 41.55" stroke="#9da0a8" stroke-width="0.7" fill="none" stroke-linecap="round" stroke-linejoin="round"/><path d="M323.1 41.55L324.6 43.05L326.1 41.55" stroke="#9da0a8" stroke-width="0.7" fill="none" stroke-linecap="round" stroke-linejoin="round"/><path d="M372.7 41.55L374.2 43.05L375.7 41.55" stroke="#9da0a8" stroke-width="0.7" fill="none" stroke-linecap="round" stroke-linejoin="round"/><path d="M438.7 41.55L440.2 43.05L441.7 41.55" stroke="#9da0a8" stroke-width="0.7" fill="none" stroke-linecap="round" stroke-linejoin="round"/><rect x="218.2" y="37.8" width="0.6" height="8.4" fill="#43454a"/><rect x="233.29999999999998" y="37.8" width="0.6" height="8.4" fill="#43454a"/><rect x="247.79999999999998" y="37.8" width="0.6" height="8.4" fill="#43454a"/><rect x="262.09999999999997" y="37.8" width="0.6" height="8.4" fill="#43454a"/><rect x="380.4" y="37.8" width="0.6" height="8.4" fill="#43454a"/><path d="M225.9 38.2L229.3 40.9L225.9 43.6L222.5 40.9Z" fill="#3574f0"/><path d="M222.7 42.6L225.9 45.3L229.1 42.6" stroke="#548af7" stroke-width="0.75" fill="none"/><path d="M228.4 46.6L230 46.6L230 45Z" fill="#ced0d6"/><circle cx="240.6" cy="41.8" r="3" stroke="#ced0d6" stroke-width="0.7" fill="none" stroke-linecap="round" stroke-linejoin="round"/><path d="M238.8 43.2L241.2 39.8L242.6 40.8L240.2 44.2Z" stroke="#ced0d6" stroke-width="0.55" fill="none" stroke-linecap="round" stroke-linejoin="round"/><path d="M243.4 46.6L245 46.6L245 45Z" fill="#ced0d6"/><path d="M254.4 39A3 3 0 1 0 257.8 43.6A2.8 2.8 0 0 1 254.4 39Z" stroke="#ced0d6" stroke-width="0.7" fill="none" stroke-linecap="round" stroke-linejoin="round"/><path d="M257.9 46.6L259.5 46.6L259.5 45Z" fill="#ced0d6"/><rect x="269" y="39.5" width="3" height="5" rx="0.7" stroke="#ced0d6" stroke-width="0.7" fill="none" stroke-linecap="round" stroke-linejoin="round"/><path d="M306.2 43.87Q306.2 41.15 308.58 41.15Q310.96 41.15 310.96 43.87Z" fill="#57965c" fill-opacity="0.55" /><path d="M307.05 41.574999999999996L306.53999999999996 40.47M310.11 41.574999999999996L310.62 40.47" stroke="#57965c" stroke-width="0.55" fill="none" stroke-linecap="round" stroke-linejoin="round"/><circle cx="337.1" cy="42" r="2.9" stroke="#dfe1e5" stroke-width="0.7" fill="none" stroke-linecap="round" stroke-linejoin="round"/><path d="M337.1 39.1A2.9 2.9 0 0 0 337.1 44.9Z" fill="#dfe1e5"/><circle cx="389" cy="42" r="2.9" stroke="#ced0d6" stroke-width="0.65" fill="none" stroke-linecap="round" stroke-linejoin="round"/><path d="M386.1 42H391.9M389 39.1Q387.2 42 389 44.9M389 39.1Q390.8 42 389 44.9" stroke="#ced0d6" stroke-width="0.5" fill="none" stroke-linecap="round" stroke-linejoin="round"/><path d="M162.2 56.3Q165.8 53 169.4 56.3Q165.8 59.6 162.2 56.3Z" stroke="#ced0d6" stroke-width="0.7" fill="none" stroke-linecap="round" stroke-linejoin="round"/><circle cx="165.8" cy="56.3" r="1.1" stroke="#ced0d6" stroke-width="0.6" fill="none" stroke-linecap="round" stroke-linejoin="round"/><path d="M168.6 60.4L170.2 60.4L170.2 58.8Z" fill="#ced0d6"/><rect x="174" y="53.3" width="6.8" height="6.2" rx="0.7" stroke="#ced0d6" stroke-width="0.7" fill="none" stroke-linecap="round" stroke-linejoin="round"/><path d="M176.3 53.3V59.5M178.5 53.3V59.5" stroke="#ced0d6" stroke-width="0.65" fill="none" stroke-linecap="round" stroke-linejoin="round"/><rect x="184.5" y="52.3" width="0.6" height="8" fill="#43454a"/><path d="M189.2 56.3H194.8M190.4 55.1L189.2 56.3L190.4 57.5M193.6 55.1L194.8 56.3L193.6 57.5" stroke="#5a5d63" stroke-width="0.65" fill="none" stroke-linecap="round" stroke-linejoin="round"/><path d="M203.6 53.4V59.2M202.4 54.6L203.6 53.4L204.8 54.6M202.4 58L203.6 59.2L204.8 58" stroke="#5a5d63" stroke-width="0.65" fill="none" stroke-linecap="round" stroke-linejoin="round"/><circle cx="600.5" cy="41.7" r="2.6" fill="#db5c5c"/><path d="M600.5 40.2V42.2" stroke="#2b2d30" stroke-width="0.75" stroke-linecap="round"/><circle cx="600.5" cy="43.3" r="0.4" fill="#2b2d30"/><rect x="5.4" y="510.4" width="3.1" height="3.1" rx="0.6" stroke="#4a7fe8" stroke-width="0.7" fill="none" stroke-linecap="round" stroke-linejoin="round"/><rect x="50.6" y="510.4" width="3.1" height="3.1" rx="0.6" stroke="#4a7fe8" stroke-width="0.7" fill="none" stroke-linecap="round" stroke-linejoin="round"/><rect x="95.6" y="510.4" width="3.1" height="3.1" rx="0.6" stroke="#4a7fe8" stroke-width="0.7" fill="none" stroke-linecap="round" stroke-linejoin="round"/><path d="M44.0 509.9L45.699999999999996 511.6L44.0 513.3" stroke="#9da0a8" stroke-width="0.65" fill="none" stroke-linecap="round" stroke-linejoin="round"/><path d="M70.60000000000001 509.9L72.30000000000001 511.6L70.60000000000001 513.3" stroke="#9da0a8" stroke-width="0.65" fill="none" stroke-linecap="round" stroke-linejoin="round"/><path d="M89.2 509.9L90.9 511.6L89.2 513.3" stroke="#9da0a8" stroke-width="0.65" fill="none" stroke-linecap="round" stroke-linejoin="round"/><path d="M118.4 509.9L120.10000000000001 511.6L118.4 513.3" stroke="#9da0a8" stroke-width="0.65" fill="none" stroke-linecap="round" stroke-linejoin="round"/><path d="M137.39999999999998 509.9L139.1 511.6L137.39999999999998 513.3" stroke="#9da0a8" stroke-width="0.65" fill="none" stroke-linecap="round" stroke-linejoin="round"/><path d="M165.2 509.9L166.9 511.6L165.2 513.3" stroke="#9da0a8" stroke-width="0.65" fill="none" stroke-linecap="round" stroke-linejoin="round"/><path d="M790 509.2H796.2V513.2H792.2L790 514.6Z" stroke="#a8abb2" stroke-width="0.65" fill="none" stroke-linecap="round" stroke-linejoin="round"/><path d="M793.1 510.4V511.6" stroke="#a8abb2" stroke-width="0.6" fill="none" stroke-linecap="round" stroke-linejoin="round"/><rect x="836.8" y="510.8" width="4.6" height="3.6" rx="0.6" stroke="#a8abb2" stroke-width="0.65" fill="none" stroke-linecap="round" stroke-linejoin="round"/><path d="M840 510.8V509.8Q840 508.4 841.4 508.4Q842.8 508.4 842.8 509.6" stroke="#a8abb2" stroke-width="0.65" fill="none" stroke-linecap="round" stroke-linejoin="round"/><rect x="813.9" y="449.8" width="11.6" height="46.4" rx="1.6" stroke="#393b40" stroke-width="0.6" fill="none" stroke-linecap="round" stroke-linejoin="round"/><path d="M817.4 455.5H822.4M819.9 453V458" stroke="#dfe1e5" stroke-width="0.75" fill="none" stroke-linecap="round" stroke-linejoin="round"/><path d="M817.6 467H822.2" stroke="#5a5d63" stroke-width="0.75" fill="none" stroke-linecap="round" stroke-linejoin="round"/><rect x="817.2" y="487.6" width="5.4" height="4.6" rx="0.6" stroke="#5a5d63" stroke-width="0.65" fill="none" stroke-linecap="round" stroke-linejoin="round"/><path d="M818.4 491L821.4 488.8" stroke="#5a5d63" stroke-width="0.5" fill="none" stroke-linecap="round" stroke-linejoin="round"/></svg>
</body></html>
